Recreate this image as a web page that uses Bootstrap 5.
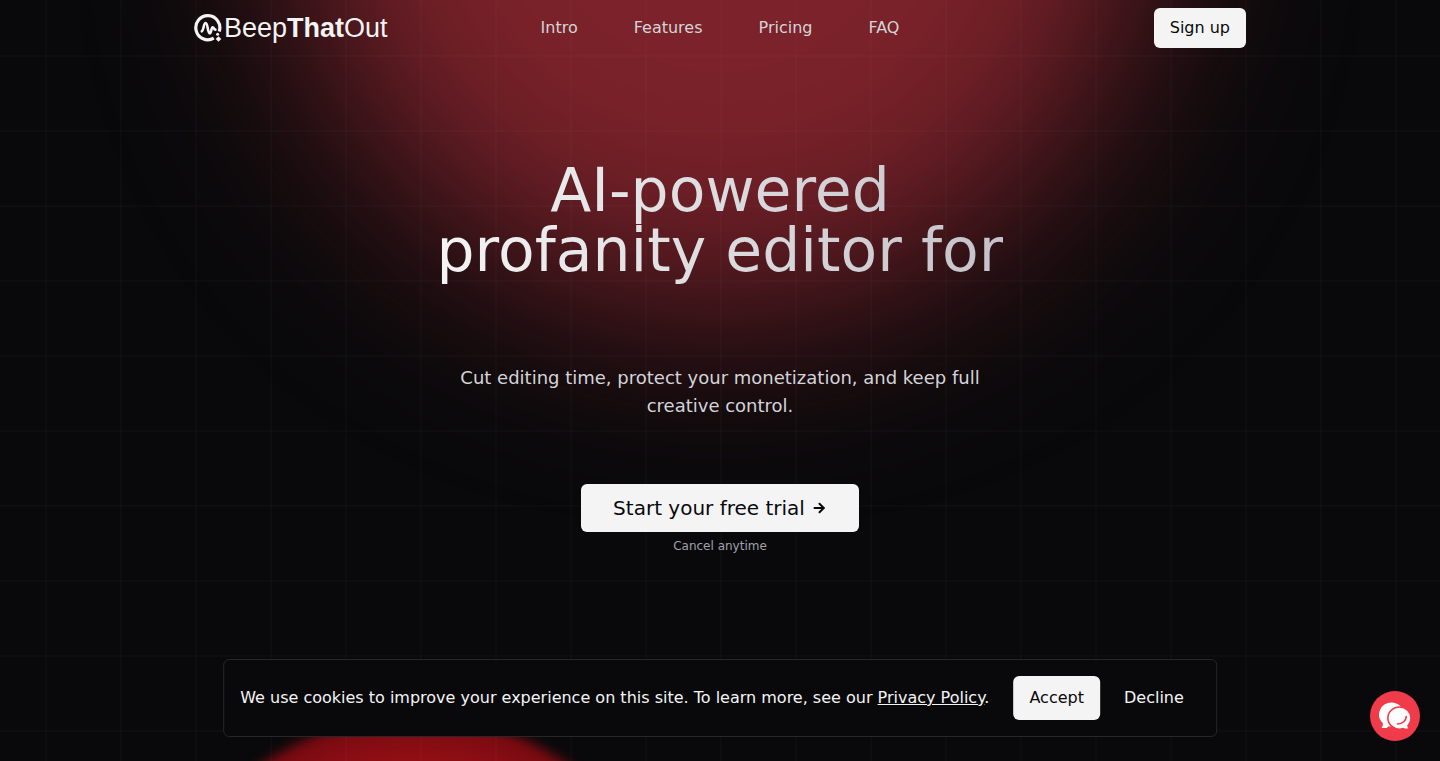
<!DOCTYPE html>
<html lang="en" data-bs-theme="dark">
<head>
<meta charset="utf-8">
<meta name="viewport" content="width=device-width, initial-scale=1">
<title>BeepThatOut</title>
<link href="https://cdn.jsdelivr.net/npm/bootstrap@5.3.0/dist/css/bootstrap.min.css" rel="stylesheet">
<style>
  :root { --ink: #09090b; --paper: #f4f4f5; --soft: #d4d4d8; --muted: #a1a1aa; --brand: #ef3b4a; }
  body { font-family: "DejaVu Sans", sans-serif; background: var(--ink); color: var(--paper); }
  .page { min-height: 100vh; overflow: hidden; isolation: isolate; }
  .glow { left: 50%; top: -554px; width: 860px; height: 860px; margin-left: -430px; background: #7b222a; filter: blur(96px); z-index: -2; }
  .orb { left: calc(50% - 571px); top: 716px; width: 532px; height: 532px; background: radial-gradient(closest-side, #9b1016 78%, #780b11 97%); filter: blur(6px); z-index: -2; }
  .gridlines { z-index: -1;
    background-image: linear-gradient(to right, rgba(255,255,255,.016) 2px, transparent 2px), linear-gradient(to bottom, rgba(255,255,255,.016) 2px, transparent 2px);
    background-size: 75px 75px; background-position: 45px 55px; }
  .shell { max-width: 1100px; }
  .logo-text { font-family: "Liberation Sans", sans-serif; font-size: 27px; line-height: 28px; }
  .menu { gap: 56px; }
  .menu a { color: var(--soft); text-decoration: none; }
  .btn { --bs-btn-line-height: 24px; --bs-btn-border-width: 0; --bs-btn-padding-x: 16px; --bs-btn-padding-y: 8px; }
  .btn-paper { --bs-btn-bg: var(--paper); --bs-btn-color: var(--ink); --bs-btn-hover-bg: #fff; --bs-btn-hover-color: var(--ink); }
  .btn-plain { --bs-btn-color: var(--paper); --bs-btn-hover-color: #fff; }
  .btn-tall { --bs-btn-padding-y: 10px; }
  .btn-cta { --bs-btn-font-size: 20px; --bs-btn-line-height: 28px; --bs-btn-padding-x: 32px; --bs-btn-padding-y: 10px; }
  .hero { padding-top: 104px; }
  .headline { max-width: 640px; min-height: 180px; font-size: 60px; line-height: 60px; font-weight: 400;
    background: linear-gradient(to right, #f4f4f5, #c4c2c8); -webkit-background-clip: text; background-clip: text; color: transparent; width: fit-content; }
  .pitch { max-width: 576px; font-size: 18px; line-height: 28px; color: var(--soft); }
  .note { margin-top: 6px; font-size: 12px; line-height: 16px; color: var(--muted); }
  .cookies { bottom: 24px; background: var(--ink); border: 1px solid #27272a; border-radius: 6px; }
  .cookies p { line-height: 24px; }
  .chat { right: 20px; bottom: 20px; width: 50px; height: 50px; background: var(--brand); }
</style>
</head>
<body>
<div class="page position-relative">
  <div class="glow position-absolute rounded-circle"></div>
  <div class="orb position-absolute rounded-circle"></div>
  <div class="gridlines position-absolute top-0 start-0 w-100 h-100"></div>

  <header class="shell container px-4 py-2">
    <div class="row align-items-center gx-0">
      <div class="col">
        <a href="#" class="d-flex align-items-center text-reset text-decoration-none">
          <svg width="30" height="28" viewBox="0 0 30 28" fill="none" stroke="#f4f4f5" stroke-width="3.200" aria-hidden="true">
            <path d="M19.800 24.100A12 12 0 1 1 25.200 17.500"/>
            <path d="M7.800 17.300C9.800 16.500 9.500 9 11.600 9C14 9 13.500 19.300 15.700 19.300C17.600 19.300 17 13.300 18.700 13.300C20 13.300 19.800 15.800 21.400 15.600" stroke-width="2.600" stroke-linecap="round"/>
            <path d="M24.500 22.200L27.300 25L24.500 27.800L21.700 25Z" fill="#f4f4f5" stroke="none"/>
            <circle cx="23.600" cy="20.300" r="1.500" fill="#f4f4f5" stroke="none"/>
          </svg>
          <span class="logo-text">Beep<strong>That</strong>Out</span>
        </a>
      </div>
      <nav class="menu col-auto d-flex" aria-label="Main">
        <a href="#intro">Intro</a>
        <a href="#features">Features</a>
        <a href="#pricing">Pricing</a>
        <a href="#faq">FAQ</a>
      </nav>
      <div class="col text-end">
        <button type="button" class="btn btn-paper">Sign up</button>
      </div>
    </div>
  </header>

  <main class="hero d-flex flex-column align-items-center text-center px-3" id="intro">
    <h1 class="headline mb-4">AI-powered<br>profanity editor for</h1>
    <p class="pitch mb-5">Cut editing time, protect your monetization, and keep full creative control.</p>
    <button type="button" class="btn btn-paper btn-cta d-inline-flex align-items-center gap-2 mt-3">Start your free trial
      <svg width="14" height="14" viewBox="0 0 14 14" fill="none" stroke="currentColor" stroke-width="2" stroke-linecap="round" stroke-linejoin="round" aria-hidden="true"><path d="M1.500 7h9.500M6.500 2.800L10.700 7L6.500 11.200"/></svg>
    </button>
    <p class="note mb-0">Cancel anytime</p>
  </main>
</div>

<div class="cookies position-fixed start-50 translate-middle-x d-flex align-items-center p-3 text-nowrap">
  <p class="mb-0 me-4">We use cookies to improve your experience on this site. To learn more, see our <a href="#privacy" class="text-reset">Privacy Policy</a>.</p>
  <button type="button" class="btn btn-paper btn-tall me-2">Accept</button>
  <button type="button" class="btn btn-plain btn-tall">Decline</button>
</div>

<button type="button" class="chat position-fixed border-0 rounded-circle p-0 d-flex align-items-center justify-content-center" aria-label="Open chat">
  <svg width="34" height="30" viewBox="0 0 34 30" aria-hidden="true">
    <path d="M13.500 1.500A12.500 12 0 0 1 26 13.500A12.500 12 0 0 1 13.500 25.500L11 25.300L8.500 27H3.500Q5.300 25 4.800 22A12.500 12 0 0 1 13.500 1.500Z" fill="#fff"/>
    <path d="M21.500 6A11.500 11 0 0 1 33 17Q33 21.500 30 24.500Q30 26.500 32 28.300H26.500L25 27.600Q23 28.200 21.500 28.200A11.500 11 0 0 1 21.500 6Z" fill="#fff" stroke="#ef3b4a" stroke-width="1.600"/>
    <path d="M28.300 15.500Q27.500 22.500 19.500 23" fill="none" stroke="#ef3b4a" stroke-width="1.700" stroke-linecap="round"/>
  </svg>
</button>
<script src="https://cdn.jsdelivr.net/npm/bootstrap@5.3.0/dist/js/bootstrap.bundle.min.js"></script>
</body>
</html>
